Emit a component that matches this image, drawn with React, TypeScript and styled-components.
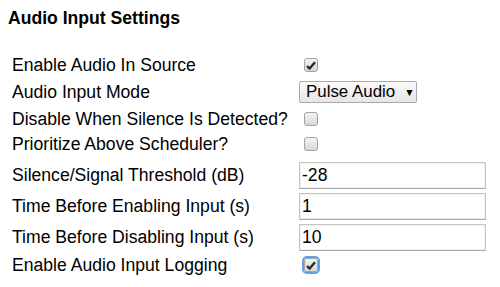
import React from "react";
import styled, { createGlobalStyle } from "styled-components";

const GlobalStyle = createGlobalStyle`
  html, body { background: #ffffff; }
  body {
    margin: 8px;
    font-family: "Liberation Sans", Arial, sans-serif;
    font-size: 17.6px;
    line-height: 20px;
    color: #000;
  }
`;

const Title = styled.h2`
  margin: 0;
  font-size: 17.6px;
  line-height: 20px;
  font-weight: bold;
`;

const Form = styled.div`
  margin-top: 26px;
  display: flex;
  flex-direction: column;
`;

const Row = styled.div<{ $mt: number }>`
  display: grid;
  grid-template-columns: 291px 187px;
  align-items: center;
  height: 22px;
  margin-top: ${(p) => p.$mt}px;
`;

const Label = styled.div`
  padding-left: 4px;
  white-space: nowrap;
`;

const Control = styled.div`
  display: flex;
  align-items: center;
  height: 22px;
`;

const Box = styled.span<{ $focus?: boolean }>`
  box-sizing: border-box;
  width: 14px;
  height: 14px;
  margin-left: 5px;
  border: 1px solid #a3a3a3;
  border-radius: 3px;
  background: linear-gradient(#f4f4f4, #d8d8d8);
  display: flex;
  align-items: center;
  justify-content: center;
  box-shadow: ${(p) => (p.$focus ? "0 0 0 2px #5fa2e6" : "none")};
`;

const SelectBox = styled.div`
  box-sizing: border-box;
  width: 118px;
  height: 22px;
  border: 1px solid #a9a9a9;
  border-radius: 2px;
  background: linear-gradient(#fafafa, #e6e6e6);
  display: flex;
  align-items: center;
  padding-left: 6px;
  gap: 9px;
  font-size: 16.9px;
`;

const Arrow = styled.span`
  font-size: 10.5px;
  line-height: 10px;
  color: #000;
`;

const TextInput = styled.input`
  box-sizing: border-box;
  width: 187px;
  height: 27px;
  margin: 0;
  padding: 0 2px;
  border: 1px solid #c6c6c6;
  border-bottom-color: #a8a8a8;
  box-shadow: inset 0 0 0 1px #f0f0f0;
  font-family: "Liberation Sans", Arial, sans-serif;
  font-size: 17.6px;
  color: #000;
  background: #fff;
  outline: none;
`;

type Item =
  | { label: string; kind: "check"; checked: boolean; focus?: boolean; mt: number }
  | { label: string; kind: "select"; value: string; mt: number }
  | { label: string; kind: "text"; value: string; mt: number };

const items: Item[] = [
  { label: "Enable Audio In Source", kind: "check", checked: true, mt: 0 },
  { label: "Audio Input Mode", kind: "select", value: "Pulse Audio", mt: 5 },
  { label: "Disable When Silence Is Detected?", kind: "check", checked: false, mt: 5 },
  { label: "Prioritize Above Scheduler?", kind: "check", checked: false, mt: 3 },
  { label: "Silence/Signal Threshold (dB)", kind: "text", value: "-28", mt: 9 },
  { label: "Time Before Enabling Input (s)", kind: "text", value: "1", mt: 9 },
  { label: "Time Before Disabling Input (s)", kind: "text", value: "10", mt: 9 },
  { label: "Enable Audio Input Logging", kind: "check", checked: true, focus: true, mt: 6 },
];

const Check = () => (
  <svg width="10" height="9" viewBox="0 0 10 9">
    <path d="M1 5 L3.6 7.6 L9 1.2" fill="none" stroke="#2b2b2b" strokeWidth="2.4" strokeLinejoin="round" />
  </svg>
);

export default function App() {
  return (
    <>
      <GlobalStyle />
      <Title>Audio Input Settings</Title>
      <Form>
        {items.map((it) => (
          <Row key={it.label} $mt={it.mt}>
            <Label>{it.label}</Label>
            <Control>
              {it.kind === "check" && <Box $focus={it.focus}>{it.checked && <Check />}</Box>}
              {it.kind === "select" && (
                <SelectBox>
                  <span>{it.value}</span>
                  <Arrow>▼</Arrow>
                </SelectBox>
              )}
              {it.kind === "text" && <TextInput defaultValue={it.value} />}
            </Control>
          </Row>
        ))}
      </Form>
    </>
  );
}
